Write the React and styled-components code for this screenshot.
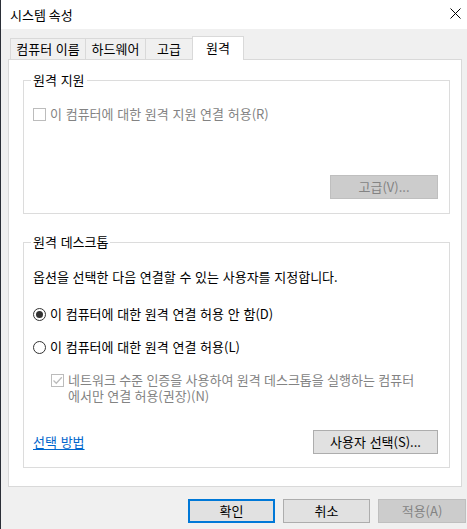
import React from "react";
import styled, { createGlobalStyle } from "styled-components";

const GlobalStyle = createGlobalStyle`
  html, body {
    margin: 0;
    padding: 0;
    background: #f0f0f0;
  }
`;

const tabs = [
  { label: "컴퓨터 이름", width: 76 },
  { label: "하드웨어", width: 61 },
  { label: "고급", width: 48 },
  { label: "원격", width: 52, active: true },
];

function App() {
  return (
    <>
      <GlobalStyle />
      <Window>
        <TitleBar>
          <span>시스템 속성</span>
          <CloseIcon viewBox="0 0 11 11">
            <path d="M0.5 0.5 L10.5 10.5 M10.5 0.5 L0.5 10.5" />
          </CloseIcon>
        </TitleBar>
        <Body>
          <TabStrip>
            {tabs.map((t) => (
              <Tab key={t.label} $w={t.width} $active={t.active}>
                {t.label}
              </Tab>
            ))}
          </TabStrip>
          <Panel>
            <GroupBox $h={142}>
              <Legend>원격 지원</Legend>
              <OptionRow $mt={18} $disabled>
                <CheckBox $disabled />
                이 컴퓨터에 대한 원격 지원 연결 허용(R)
              </OptionRow>
              <ButtonRow $mt={53}>
                <Button $w={108} $disabled>
                  고급(V)...
                </Button>
              </ButtonRow>
            </GroupBox>

            <GroupBox $mt={20}>
              <Legend>원격 데스크톱</Legend>
              <Text $mt={19}>옵션을 선택한 다음 연결할 수 있는 사용자를 지정합니다.</Text>
              <OptionRow $mt={21}>
                <Radio $checked />
                이 컴퓨터에 대한 원격 연결 허용 안 함(D)
              </OptionRow>
              <OptionRow $mt={17}>
                <Radio />
                이 컴퓨터에 대한 원격 연결 허용(L)
              </OptionRow>
              <SubOption $mt={17} $disabled>
                <CheckBox $disabled $checked>
                  <svg viewBox="0 0 11 11">
                    <path d="M1.5 5.5 L4.3 8.3 L9.8 2.2" />
                  </svg>
                </CheckBox>
                <span>
                  네트워크 수준 인증을 사용하여 원격 데스크톱을 실행하는 컴퓨터
                  <br />
                  에서만 연결 허용(권장)(N)
                </span>
              </SubOption>
              <ButtonRow $mt={26} $between>
                <Link href="#">선택 방법</Link>
                <Button $w={125}>사용자 선택(S)...</Button>
              </ButtonRow>
            </GroupBox>
          </Panel>
          <DialogButtons>
            <Button $w={87} $default>
              확인
            </Button>
            <Button $w={87}>취소</Button>
            <Button $w={88} $disabled>
              적용(A)
            </Button>
          </DialogButtons>
        </Body>
      </Window>
    </>
  );
}

export default App;

const Window = styled.div`
  width: 467px;
  height: 529px;
  box-sizing: border-box;
  border-left: 1px solid #2b2f38;
  background: #f0f0f0;
  display: flex;
  flex-direction: column;
  font-family: "Noto Sans CJK KR", "Malgun Gothic", sans-serif;
  font-size: 13px;
  line-height: 16px;
  word-spacing: 0.8px;
  color: #000;
  overflow: hidden;
`;

const TitleBar = styled.div`
  height: 29px;
  flex: none;
  background: #fff;
  display: flex;
  align-items: center;
  justify-content: space-between;
  padding: 0 6px 0 9px;
  font-size: 13px;
  word-spacing: 0;
`;

const CloseIcon = styled.svg`
  width: 11px;
  height: 11px;
  margin-top: -2px;

  path {
    stroke: #000;
    stroke-width: 1;
    fill: none;
  }
`;

const Body = styled.div`
  flex: 1;
  padding: 7px 0 0 7px;
  display: flex;
  flex-direction: column;
`;

const TabStrip = styled.div`
  display: flex;
  align-items: flex-end;
  height: 24px;
  margin-left: 2px;
  margin-bottom: -1px;
  position: relative;
  z-index: 1;
`;

const Tab = styled.div`
  box-sizing: border-box;
  width: ${(p) => p.$w}px;
  height: ${(p) => (p.$active ? 24 : 22)}px;
  margin-left: -1px;
  &:first-child {
    margin-left: 0;
  }
  border: 1px solid #d9d9d9;
  border-bottom: ${(p) => (p.$active ? "none" : "1px solid #d9d9d9")};
  background: ${(p) => (p.$active ? "#fff" : "#f0f0f0")};
  display: flex;
  align-items: center;
  justify-content: center;
  padding-bottom: ${(p) => (p.$active ? 1 : 0)}px;
  white-space: nowrap;
`;

const Panel = styled.div`
  box-sizing: border-box;
  width: 454px;
  height: 428px;
  flex: none;
  border: 1px solid #d9d9d9;
  background: #fff;
  padding: 12px 11px 0 14px;
  display: flex;
  flex-direction: column;
`;

const GroupBox = styled.fieldset`
  margin: ${(p) => p.$mt || 0}px 0 0 0;
  padding: 0 11px 13px 9px;
  border: 1px solid #dcdcdc;
  min-width: 0;
  display: flex;
  flex-direction: column;
  ${(p) => (p.$h ? `height: ${p.$h}px; box-sizing: border-box; padding-bottom: 0;` : "")}
`;

const Legend = styled.legend`
  padding: 0 2px;
  margin-left: -2px;
  line-height: 16px;
`;

const Text = styled.div`
  margin-top: ${(p) => p.$mt || 0}px;
  white-space: nowrap;
`;

const OptionRow = styled.label`
  margin-top: ${(p) => p.$mt || 0}px;
  display: flex;
  align-items: center;
  gap: 4px;
  height: 16px;
  white-space: nowrap;
  color: ${(p) => (p.$disabled ? "#838383" : "#000")};
`;

const SubOption = styled.label`
  margin-top: ${(p) => p.$mt || 0}px;
  margin-left: 18px;
  display: flex;
  align-items: flex-start;
  gap: 4px;
  white-space: nowrap;
  word-spacing: 0.4px;
  color: ${(p) => (p.$disabled ? "#838383" : "#000")};

  & > span:first-child {
    margin-top: 2px;
  }
`;

const CheckBox = styled.span`
  box-sizing: border-box;
  width: 13px;
  height: 13px;
  flex: none;
  border: 1px solid ${(p) => (p.$disabled ? "#bcbcbc" : "#333")};
  background: #fff;
  display: flex;
  align-items: center;
  justify-content: center;

  svg {
    width: 11px;
    height: 11px;
  }
  path {
    fill: none;
    stroke: #bcbcbc;
    stroke-width: 1.3;
  }
`;

const Radio = styled.span`
  box-sizing: border-box;
  width: 13px;
  height: 13px;
  flex: none;
  border-radius: 50%;
  border: 1px solid #333;
  background: #fff;
  display: flex;
  align-items: center;
  justify-content: center;

  &::after {
    content: "";
    display: ${(p) => (p.$checked ? "block" : "none")};
    width: 7px;
    height: 7px;
    border-radius: 50%;
    background: #333;
  }
`;

const ButtonRow = styled.div`
  margin-top: ${(p) => p.$mt || 0}px;
  display: flex;
  align-items: center;
  justify-content: ${(p) => (p.$between ? "space-between" : "flex-end")};
`;

const Button = styled.button`
  box-sizing: border-box;
  width: ${(p) => p.$w}px;
  height: 24px;
  padding: 0;
  font-family: inherit;
  font-size: 13px;
  line-height: 16px;
  word-spacing: inherit;
  color: ${(p) => (p.$disabled ? "#838383" : "#000")};
  background: ${(p) => (p.$disabled ? "#cccccc" : "#e1e1e1")};
  border: ${(p) =>
    p.$default
      ? "2px solid #0078d7"
      : p.$disabled
        ? "1px solid #bfbfbf"
        : "1px solid #adadad"};
  border-radius: 0;
`;

const Link = styled.a`
  color: #0066cc;
  text-decoration: underline;
  text-underline-offset: 2px;
`;

const DialogButtons = styled.div`
  margin-top: 12px;
  display: flex;
  justify-content: flex-end;
  gap: 8px;
  padding-right: 1px;
`;
